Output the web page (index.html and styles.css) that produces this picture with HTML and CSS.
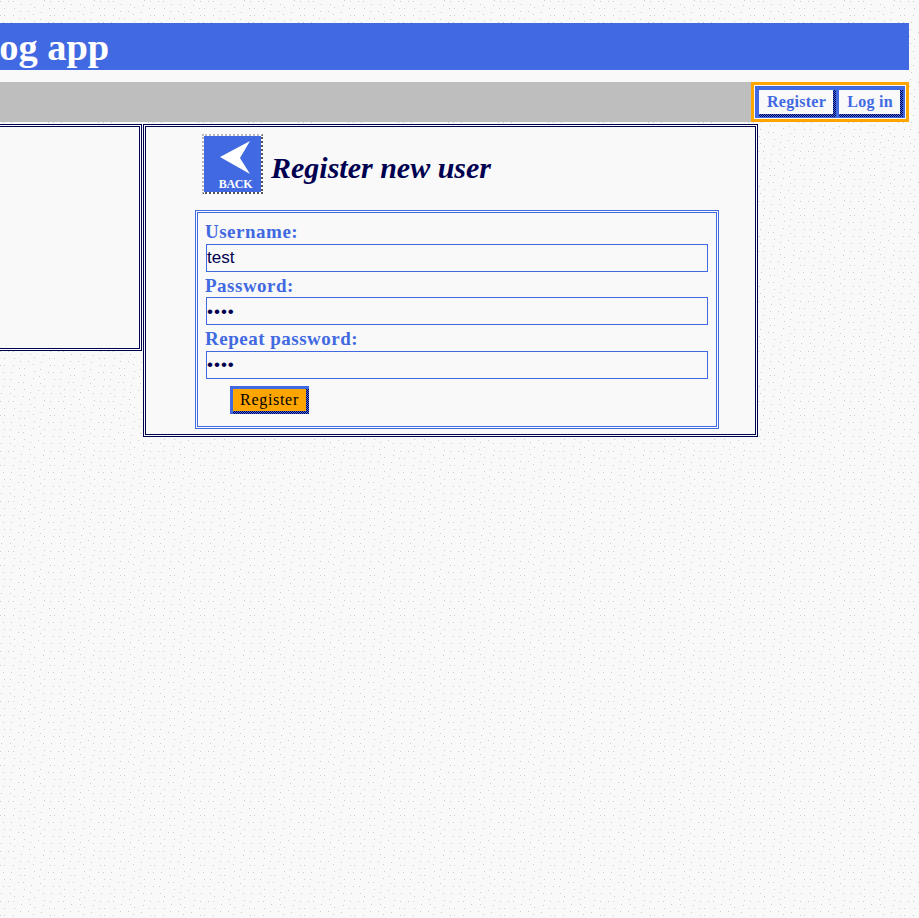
FILE: index.html
```html
<!DOCTYPE html>
<html lang="en">
<head>
    <meta charset="UTF-8" />
    <meta name="viewport" content="width=device-width, initial-scale=1" />
    <title>Blog app</title>
    <link rel="stylesheet" href="styles.css">
</head>
<body>
    <div class="page">
        <div class="top">
            <h1 class="site-title">Blog app</h1>
            <nav class="nav-bar">
                <div class="nav-box">
                    <div class="nav-links">
                        <a class="bevel nav-link" href="#">Register</a>
                        <a class="bevel nav-link" href="#">Log in</a>
                    </div>
                </div>
            </nav>
        </div>
        <div class="columns">
            <aside class="panel side-panel"></aside>
            <main class="panel main-panel">
                <div class="title-row">
                    <a class="back-link" href="#" aria-label="Back">
                        <svg width="57" height="56" viewBox="2 2 57 56">
                            <polygon points="18,23 48,7 38,24 48,40" fill="#ffffff" />
                            <text x="33.5" y="54" class="back-text" text-anchor="middle">BACK</text>
                        </svg>
                    </a>
                    <h2 class="page-title">Register new user</h2>
                </div>
                <form class="register-form">
                    <label for="username">Username:</label>
                    <input type="text" id="username" name="username" value="test" />

                    <label for="password">Password:</label>
                    <input class="secret" type="password" id="password" name="password" value="test" />

                    <label for="repeat">Repeat password:</label>
                    <input class="secret" type="password" id="repeat" name="repeat" value="test" />

                    <button class="bevel submit-btn" type="submit">Register</button>
                </form>
            </main>
        </div>
    </div>
</body>
</html>
```

FILE: styles.css
```css
:root {
    --blue: #4169e1;
    --navy: #000050;
    --paper: #f9f9f9;
}
body {
    margin: 0;
    font-family: "Liberation Serif", serif;
    background-color: var(--paper);
    background-image: url("data:image/svg+xml,%3Csvg xmlns='http://www.w3.org/2000/svg' width='50' height='50'%3E%3Cpath fill='%23cbcbcb' d='M0 1h1v1h-1zM8 1h1v1h-1zM13 1h1v1h-1zM21 4h1v1h-1zM30 4h1v1h-1zM34 7h1v1h-1zM43 5h1v1h-1zM49 8h1v1h-1zM4 8h1v1h-1zM14 8h1v1h-1zM20 11h1v1h-1zM28 11h1v1h-1zM33 14h1v1h-1zM41 12h1v1h-1zM0 15h1v1h-1zM4 15h1v1h-1zM13 15h1v1h-1zM19 18h1v1h-1zM24 18h1v1h-1zM34 21h1v1h-1zM40 19h1v1h-1zM48 22h1v1h-1zM3 22h1v1h-1zM11 22h1v1h-1zM20 25h1v1h-1zM24 25h1v1h-1zM33 28h1v1h-1zM39 26h1v1h-1zM44 29h1v1h-1zM4 29h1v1h-1zM10 29h1v1h-1zM18 32h1v1h-1zM23 32h1v1h-1zM31 35h1v1h-1zM40 33h1v1h-1zM44 36h1v1h-1zM3 36h1v1h-1zM9 36h1v1h-1zM14 39h1v1h-1zM24 39h1v1h-1zM30 42h1v1h-1zM38 40h1v1h-1zM43 43h1v1h-1zM1 43h1v1h-1zM10 43h1v1h-1zM14 46h1v1h-1zM23 46h1v1h-1zM29 49h1v1h-1zM34 47h1v1h-1zM44 0h1v1h-1z'/%3E%3C/svg%3E");
    min-height: 918px;
    overflow: hidden;
}
.page {
    margin-left: -40px;
    padding-top: 23px;
    width: 949px;
}
.top {
    background-color: var(--paper);
}
.site-title {
    margin: 0 0 12px;
    height: 47px;
    padding-left: 3px;
    font-size: 38.4px;
    line-height: 48px;
    color: #fff;
    background-color: var(--blue);
    box-sizing: border-box;
    overflow: hidden;
}
.nav-bar {
    display: flex;
    justify-content: flex-end;
    background-color: #bebebf;
}
.nav-box {
    border: 3px solid #ffa500;
    padding: 1px;
    background-color: var(--paper);
}
.nav-links {
    display: flex;
    border: 1px solid var(--blue);
    padding-right: 1px;
    background-color: var(--blue);
}
/* blue top/left edge, checkered bottom/right edge */
.bevel {
    --face: var(--paper);
    border: none;
    background:
        linear-gradient(var(--face), var(--face)) 3px 3px / calc(100% - 6px) calc(100% - 6px) no-repeat,
        linear-gradient(var(--blue), var(--blue)) 0 0 / 100% 3px no-repeat,
        linear-gradient(var(--blue), var(--blue)) 0 0 / 3px 100% no-repeat,
        repeating-conic-gradient(var(--navy) 0 25%, var(--blue) 0 50%) 0 0 / 2px 2px;
}
.nav-link {
    display: block;
    height: 30px;
    padding: 0 10px 0 11px;
    font-size: 16px;
    font-weight: bold;
    line-height: 29px;
    letter-spacing: 0.3px;
    color: var(--blue);
    text-decoration: none;
}
.columns {
    display: flex;
    gap: 1px;
    margin-top: 2px;
    align-items: flex-start;
}
.panel {
    box-sizing: border-box;
    border: 3px double var(--navy);
    background-color: var(--paper);
}
.side-panel {
    width: 182px;
    height: 227px;
}
.main-panel {
    width: 615px;
    height: 313px;
    padding: 7px 36px 0 49px;
}
.title-row {
    display: flex;
    align-items: center;
    gap: 8px;
    margin-left: 7px;
    height: 60px;
}
.back-link {
    display: block;
    box-sizing: border-box;
    width: 61px;
    height: 60px;
    border: 2px dotted #bbb;
    border-right-color: #555;
    border-bottom-color: #555;
    background: linear-gradient(var(--blue), var(--blue)) padding-box, #fff border-box;
}
.back-link svg {
    display: block;
}
.back-text {
    font-family: "Liberation Serif", serif;
    font-size: 12px;
    font-weight: bold;
    letter-spacing: -0.3px;
    fill: #fff;
}
.page-title {
    margin: 0;
    padding-top: 8px;
    font-size: 30px;
    font-style: italic;
    color: var(--navy);
}
.register-form {
    box-sizing: border-box;
    height: 219px;
    margin-top: 16px;
    padding: 5.4px 7px 0;
    border: 3px double var(--blue);
}
.register-form label {
    display: block;
    height: 25.5px;
    font-size: 19px;
    font-weight: bold;
    line-height: 27px;
    letter-spacing: 0.5px;
    color: var(--blue);
}
.register-form input {
    display: block;
    box-sizing: border-box;
    width: 502px;
    height: 28px;
    margin-left: 1px;
    padding: 1px 0 0;
    font-family: "Liberation Sans", sans-serif;
    font-size: 17px;
    color: var(--navy);
    background-color: var(--paper);
    border: 1px solid var(--blue);
    border-radius: 0;
    outline: none;
}
.register-form .secret {
    letter-spacing: 1px;
}
.submit-btn {
    --face: #ffa500;
    display: block;
    width: 79px;
    height: 28px;
    margin: 7px 0 0 25px;
    padding: 0;
    font-family: "Liberation Serif", serif;
    font-size: 16px;
    letter-spacing: 0.7px;
    color: #000;
}
```
